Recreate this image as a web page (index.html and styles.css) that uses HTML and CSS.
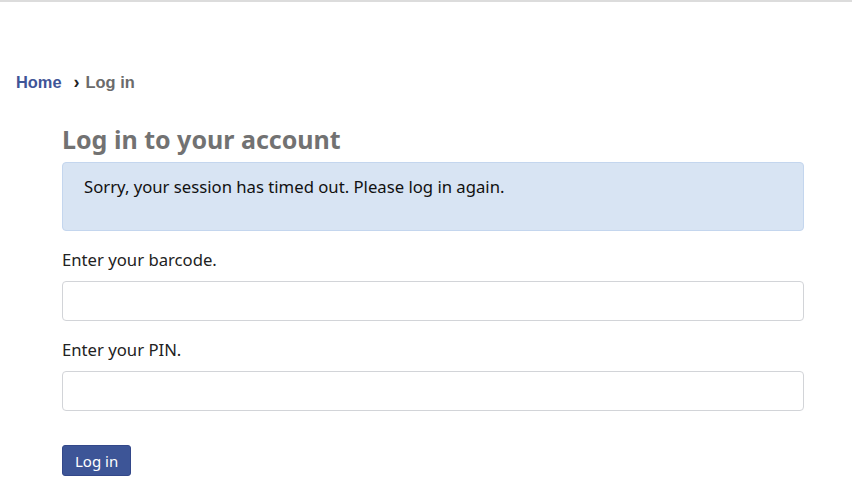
FILE: index.html
```html
<!DOCTYPE html>
<html>
<head>
<meta charset="utf-8">
<link rel="stylesheet" href="styles.css">
</head>
<body>
<div class="topbar"></div>
<nav class="breadcrumbs">
  <a href="#" class="crumb-home">Home</a>
  <span class="sep">›</span>
  <span class="crumb-current">Log in</span>
</nav>
<main class="main">
  <h1 class="title">Log in to your account</h1>
  <div class="alert">Sorry, your session has timed out. Please log in again.</div>
  <form class="form">
    <label class="label" for="userid">Enter your barcode.</label>
    <input class="input" id="userid" type="text">
    <label class="label" for="password">Enter your PIN.</label>
    <input class="input" id="password" type="password">
    <div class="actions"><button type="button" class="btn">Log in</button></div>
  </form>
</main>
</body>
</html>
```
FILE: styles.css
```css
* { box-sizing: border-box; }
html, body { margin: 0; padding: 0; background: #fff; }
body { font-family: "Noto Sans", sans-serif; color: #222; font-size: 16.7px; }
.topbar { height: 2px; background: #dcdcdc; }
.breadcrumbs {
  padding: 70px 16px 0;
  font-family: "Liberation Sans", Arial, sans-serif;
  font-weight: bold;
  font-size: 16.4px;
  line-height: 20px;
  display: flex;
  align-items: center;
}
.crumb-home { color: #3f5597; text-decoration: none; }
.sep { color: #222; margin: 0 6px 0 12px; font-size: 18px; }
.crumb-current { color: #6b6b6b; }
.main { padding: 0 48px 0 62px; }
.title {
  margin: 31px 0 7px;
  font-size: 25px;
  line-height: 32px;
  color: #727272;
  font-weight: bold;
}
.alert {
  background: #d8e4f3;
  border: 1px solid #c4d6ee;
  border-radius: 4px;
  padding: 12px 21px 0;
  height: 69px;
  font-size: 16.7px;
  line-height: 24px;
  color: #111;
}
.form { display: flex; flex-direction: column; margin-top: 17px; }
.label { font-size: 16.7px; line-height: 24px; color: #222; margin-bottom: 9px; }
.input {
  height: 40px;
  border: 1px solid #d2d4d8;
  border-radius: 4px;
  margin-bottom: 17px;
  font: inherit;
}
.actions { margin-top: 17px; }
.btn {
  background: #3d5597;
  color: #fff;
  border: 1px solid #33488a;
  border-radius: 3px;
  font-family: "Noto Sans", sans-serif;
  font-size: 15px;
  height: 31px;
  padding: 0 12px;
}
```
